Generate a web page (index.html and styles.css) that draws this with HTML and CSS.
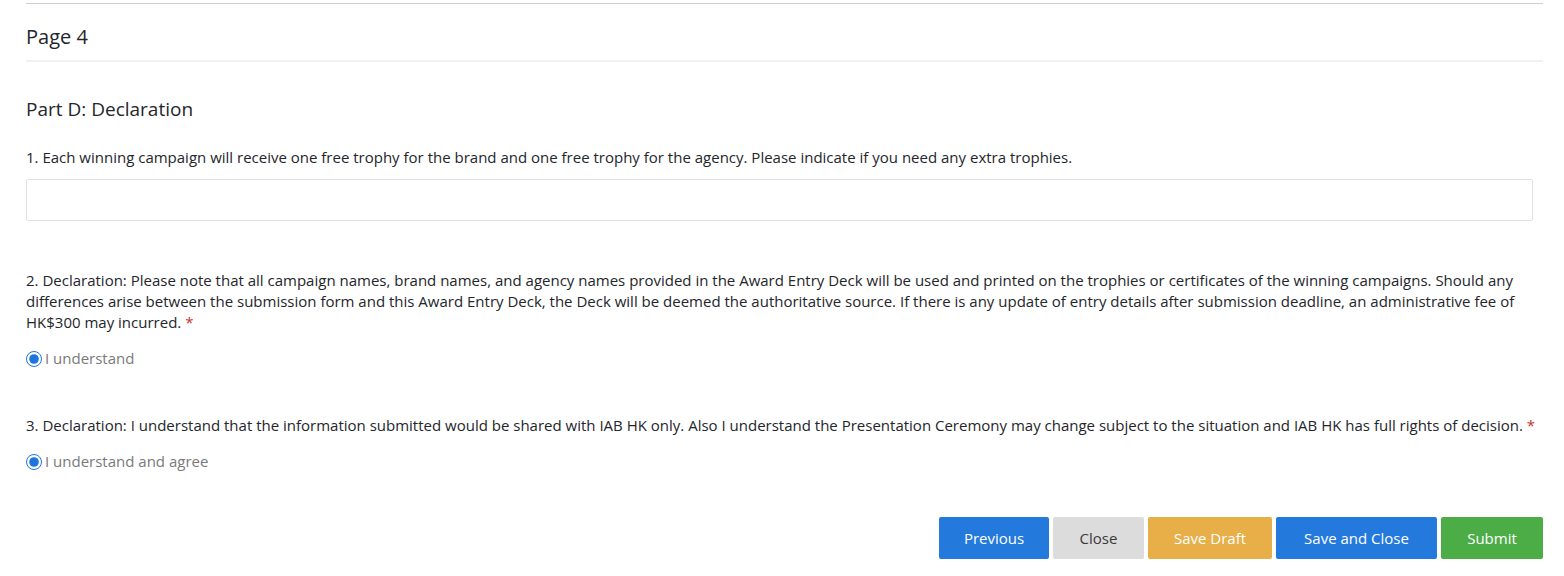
FILE: index.html
```html
<!DOCTYPE html>
<html lang="en">
<head>
<meta charset="utf-8">
<title>Page 4</title>
<link rel="stylesheet" href="styles.css">
</head>
<body>
<div class="form">
  <div class="page-head">Page 4</div>
  <h3 class="part-title">Part D: Declaration</h3>

  <div class="question q1">
    <label class="q-label" for="trophies">1. Each winning campaign will receive one free trophy for the brand and one free trophy for the agency. Please indicate if you need any extra trophies.</label>
    <input class="text-input" id="trophies" type="text">
  </div>

  <div class="question q2">
    <p class="q-label">2. Declaration: Please note that all campaign names, brand names, and agency names provided in the Award Entry Deck will be used and printed on the trophies or certificates of the winning campaigns. Should any differences arise between the submission form and this Award Entry Deck, the Deck will be deemed the authoritative source. If there is any update of entry details after submission deadline, an administrative fee of HK$300 may incurred.&nbsp;<span class="req">*</span></p>
    <label class="radio-row"><input type="radio" name="d2" checked><span>I understand</span></label>
  </div>

  <div class="question q3">
    <p class="q-label">3. Declaration: I understand that the information submitted would be shared with IAB HK only. Also I understand the Presentation Ceremony may change subject to the situation and IAB HK has full rights of decision.&nbsp;<span class="req">*</span></p>
    <label class="radio-row"><input type="radio" name="d3" checked><span>I understand and agree</span></label>
  </div>

  <div class="actions">
    <button class="btn btn-blue btn-prev">Previous</button>
    <button class="btn btn-gray btn-close">Close</button>
    <button class="btn btn-yellow btn-draft">Save Draft</button>
    <button class="btn btn-blue btn-saveclose">Save and Close</button>
    <button class="btn btn-green btn-submit">Submit</button>
  </div>
</div>
</body>
</html>
```
FILE: styles.css
```css
* { box-sizing: border-box; }
html, body { margin: 0; padding: 0; background: #fff; }
body {
  font-family: "Open Sans", "Liberation Sans", sans-serif;
  color: #24262b;
  font-size: 15px;
}
.form {
  margin: 3px 21px 0 26px;
}
.page-head {
  border-top: 1px solid #cfcfcf;
  border-bottom: 2px solid #f1f1f1;
  padding: 21px 0 11px;
  font-size: 20px;
  line-height: 24px;
}
.part-title {
  margin: 35px 0 0;
  font-size: 19px;
  line-height: 24px;
  font-weight: 400;
}
.q-label {
  display: block;
  margin: 0;
  line-height: 21px;
}
.q1 { margin-top: 26px; }
.text-input {
  display: block;
  margin-top: 11px;
  width: calc(100% - 10px);
  height: 42px;
  border: 1px solid #e2e2e2;
  border-radius: 2px;
  outline: none;
}
.q2 { margin-top: 49px; }
.q3 { margin-top: 46px; }
.req { color: #c9302c; }
.radio-row {
  display: flex;
  align-items: center;
  margin-top: 15px;
  line-height: 21px;
  color: #7a7a7a;
}
.radio-row input {
  margin: 0 3px 0 0;
  width: 16px;
  height: 16px;
  flex: none;
  accent-color: #1f74e0;
}
.actions {
  margin-top: 45px;
  display: flex;
  justify-content: flex-end;
  gap: 4px;
}
.btn {
  height: 42px;
  border: none;
  border-radius: 2px;
  font-family: inherit;
  font-size: 15px;
  font-weight: 500;
  color: #fff;
  padding: 0;
  cursor: pointer;
}
.btn-blue { background: #2379dc; }
.btn-gray { background: #dcdcdc; color: #3a3a3a; font-weight: 400; }
.btn-yellow { background: #e8ae48; }
.btn-green { background: #4cad47; }
.btn-prev { width: 110px; }
.btn-close { width: 91px; }
.btn-draft { width: 124px; }
.btn-saveclose { width: 161px; }
.btn-submit { width: 102px; }
```
